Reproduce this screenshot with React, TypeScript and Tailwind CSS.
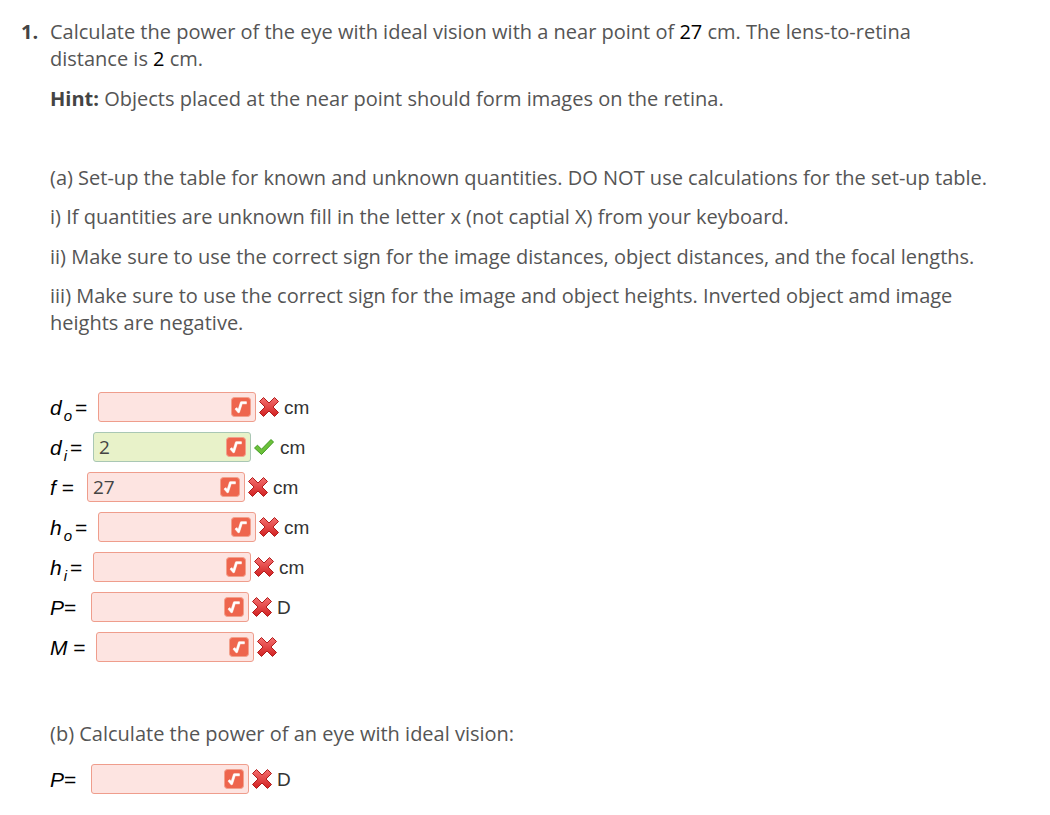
import React from "react";

const body = { fontFamily: '"Open Sans", "Noto Sans", sans-serif' };
const math = { fontFamily: '"Liberation Sans", Arial, sans-serif' };

type Row = {
  key: string;
  sym: string;
  sub?: string;
  eq: string;
  labelW: string;
  value?: string;
  ok?: boolean;
  unit?: string;
};

const ROWS: Row[] = [
  { key: "do", sym: "d", sub: "o", eq: "=", labelW: "w-[48px]", unit: "cm" },
  { key: "di", sym: "d", sub: "i", eq: "=", labelW: "w-[43px]", value: "2", ok: true, unit: "cm" },
  { key: "f", sym: "f", eq: " =", labelW: "w-[37px]", value: "27", unit: "cm" },
  { key: "ho", sym: "h", sub: "o", eq: "=", labelW: "w-[48px]", unit: "cm" },
  { key: "hi", sym: "h", sub: "i", eq: "=", labelW: "w-[43px]", unit: "cm" },
  { key: "P", sym: "P", eq: "=", labelW: "w-[41px]", unit: "D" },
  { key: "M", sym: "M", eq: " =", labelW: "w-[46px]" },
];

function SqrtIcon() {
  return (
    <svg width="20" height="20" viewBox="0 0 20 20" className="shrink-0">
      <rect x="0.5" y="0.5" width="19" height="19" rx="3" fill="#ee654d" stroke="#f2a08c" />
      <path d="M4.8 11.2 L7.6 14.6 L10.4 5.8 H15.6" fill="none" stroke="#f9d3c8" strokeWidth="3" strokeLinejoin="round" />
      <path d="M4.8 11.2 L7.6 14.6 L10.4 5.8 H15.6" fill="none" stroke="#ffffff" strokeWidth="2" strokeLinejoin="round" />
    </svg>
  );
}

function CrossIcon() {
  return (
    <svg width="22" height="22" viewBox="0 0 22 22" className="shrink-0">
      <defs>
        <linearGradient id="xg" x1="0" y1="0" x2="0" y2="1">
          <stop offset="0" stopColor="#f47070" />
          <stop offset="1" stopColor="#d22020" />
        </linearGradient>
      </defs>
      <path
        d="M1.5 5.5 L5.5 1.5 L11 7 L16.5 1.5 L20.5 5.5 L15 11 L20.5 16.5 L16.5 20.5 L11 15 L5.5 20.5 L1.5 16.5 L7 11 Z"
        fill="url(#xg)"
        stroke="#b01c1c"
        strokeWidth="1"
        strokeLinejoin="round"
      />
    </svg>
  );
}

function CheckIcon() {
  return (
    <svg width="22" height="20" viewBox="0 0 22 20" className="shrink-0">
      <path
        d="M1.5 11 L4.5 8.2 L8.5 12.2 L18 2.5 L20.5 5 L8.5 17.5 Z"
        fill="#6cc13a"
        stroke="#3f9a1f"
        strokeWidth="1"
        strokeLinejoin="round"
      />
    </svg>
  );
}

function Label({ row }: { row: Row }) {
  return (
    <span className={`${row.labelW} shrink-0 text-[21px] text-black leading-none whitespace-pre`} style={math}>
      <i>{row.sym}</i>
      {row.sub && <i className="text-[15px] relative top-[6px] ml-[2px]">{row.sub}</i>}
      <span className={row.sub ? "ml-[3px]" : ""}>{row.eq}</span>
    </span>
  );
}

function AnswerRow({ row }: { row: Row }) {
  return (
    <div className="flex items-center h-[30px]">
      <Label row={row} />
      <div
        className={`w-[158px] h-[30px] rounded-[3px] border flex items-center justify-between pl-[5px] pr-[4px] ${
          row.ok ? "bg-[#e8f2c9] border-[#a9c7b4]" : "bg-[#fde4e1] border-[#ef9d8c]"
        }`}
      >
        <span className="text-[19px] text-[#444]" style={body}>{row.value ?? ""}</span>
        <SqrtIcon />
      </div>
      <div className="ml-[2px] flex items-center">
        {row.ok ? <CheckIcon /> : <CrossIcon />}
      </div>
      {row.unit && (
        <span className={`${row.ok ? "ml-[5px]" : "ml-[4px]"} text-[19px] text-[#333]`} style={math}>
          {row.unit}
        </span>
      )}
    </div>
  );
}

export default function App() {
  return (
    <div className="w-[1050px] h-[815px] bg-white text-[20px] leading-[27px] text-[#555]" style={body}>
      <div className="relative pl-[50px] pt-[18px]">
        <span className="absolute left-[21px] top-[18px] font-bold text-[#444]">1.</span>
        <p className="w-[940px]">
          Calculate the power of the eye with ideal vision with a near point of <span className="text-black">27</span> cm. The lens-to-retina distance is <span className="text-black">2</span> cm.
        </p>
        <p className="mt-[13px]">
          <b className="text-[#444]">Hint:</b> Objects placed at the near point should form images on the retina.
        </p>

        <p className="mt-[52px]">(a) Set-up the table for known and unknown quantities. DO NOT use calculations for the set-up table.</p>
        <p className="mt-[12px]">i) If quantities are unknown fill in the letter x (not captial X) from your keyboard.</p>
        <p className="mt-[13px]">ii) Make sure to use the correct sign for the image distances, object distances, and the focal lengths.</p>
        <p className="mt-[12px] w-[940px]">
          iii) Make sure to use the correct sign for the image and object heights. Inverted object amd image heights are negative.
        </p>

        <div className="mt-[56px] flex flex-col gap-[10px]">
          {ROWS.map((r) => (
            <AnswerRow key={r.key} row={r} />
          ))}
        </div>

        <p className="mt-[58px]">(b) Calculate the power of an eye with ideal vision:</p>
        <div className="mt-[17px]">
          <AnswerRow row={{ key: "Pb", sym: "P", eq: "=", labelW: "w-[41px]", unit: "D" }} />
        </div>
      </div>
    </div>
  );
}
